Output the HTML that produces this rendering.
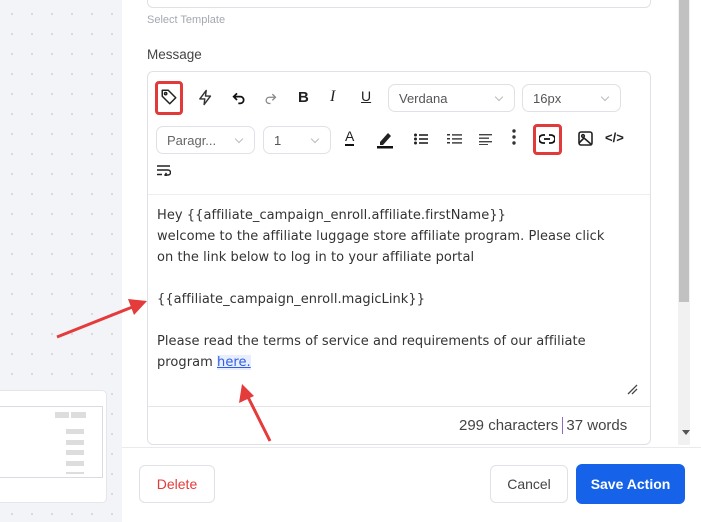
<!DOCTYPE html>
<html><head><style>
*{box-sizing:border-box;margin:0;padding:0}
body{width:701px;height:522px;overflow:hidden;position:relative;background:#fff;font-family:"Liberation Sans",sans-serif}
.left{position:absolute;left:0;top:0;width:122px;height:522px;background-color:#f3f4f7;background-image:radial-gradient(circle,#d6d8de 1px,transparent 1.3px);background-size:20px 20px;background-position:2px 4px}
.abs{position:absolute}
.ico{position:absolute;color:#222}
.sel{position:absolute;border:1px solid #dfe1e6;border-radius:7px;height:28px;font-size:13px;color:#555;padding:6px 10px}
.sel:after{content:"";position:absolute;right:12px;top:9px;width:5px;height:5px;border-right:1px solid #bbb;border-bottom:1px solid #bbb;transform:rotate(45deg)}
.txt{position:absolute;left:157px;font-family:"DejaVu Sans",sans-serif;font-size:13px;color:#333;white-space:nowrap;letter-spacing:0.05px}
</style></head><body>
<div class="left"></div>
<div class="abs" style="left:0;top:390px;width:107px;height:113px;background:#fff;border:1px solid #e4e6ea;border-left:none;border-radius:0 5px 5px 0"></div>
<div class="abs" style="left:0;top:406px;width:103px;height:72px;border:1px solid #d9dbe0;border-left:none"></div>
<div class="abs" style="left:55px;top:412px;width:14px;height:6px;background:#ddd"></div>
<div class="abs" style="left:71px;top:412px;width:15px;height:6px;background:#ddd"></div>
<div class="abs" style="left:66px;top:429px;width:18px;height:5px;background:#ddd"></div>
<div class="abs" style="left:66px;top:440px;width:18px;height:5px;background:#ddd"></div>
<div class="abs" style="left:66px;top:450px;width:18px;height:5px;background:#ddd"></div>
<div class="abs" style="left:66px;top:461px;width:18px;height:5px;background:#ddd"></div>
<div class="abs" style="left:66px;top:472px;width:18px;height:2px;background:#ddd"></div>
<div class="abs" style="left:678px;top:0;width:12px;height:445px;background:#f1f1f1"></div>
<div class="abs" style="left:679px;top:0;width:10px;height:302px;background:#c1c1c1"></div>
<div class="abs" style="left:682px;top:430px;width:0;height:0;border-left:4px solid transparent;border-right:4px solid transparent;border-top:5px solid #555"></div>
<div class="abs" style="left:147px;top:-10px;width:504px;height:18px;border:1px solid #dfe1e6;border-radius:6px"></div>
<div class="abs" style="left:147px;top:14px;font-size:11px;color:#a3a8b0">Select Template</div>
<div class="abs" style="left:147px;top:47px;font-size:13.5px;color:#444">Message</div>
<div class="abs" style="left:147px;top:71px;width:504px;height:374px;border:1px solid #dfe1e6;border-radius:6px"></div>
<div class="abs" style="left:148px;top:194px;width:502px;height:1px;background:#eceef1"></div>
<div class="abs" style="left:148px;top:406px;width:502px;height:1px;background:#e4e6ea"></div>
<div class="abs" style="left:155px;top:81px;width:28px;height:34px;border:3px solid #e03a3a;border-radius:4px"></div>
<svg class="ico" style="left:160px;top:88px" width="18" height="18" viewBox="0 0 24 24" fill="none" stroke="#222" stroke-width="2" stroke-linejoin="round"><path d="M3 3h8l10 10-8 8L3 11z"/><circle cx="7.5" cy="7.5" r="1.5"/></svg>
<svg class="ico" style="left:197px;top:89px" width="17" height="17" viewBox="0 0 24 24" fill="none" stroke="#333" stroke-width="2" stroke-linejoin="round"><path d="M13 2L4 14h7l-1 8 9-12h-7z"/></svg>
<svg class="ico" style="left:231px;top:90px" width="16" height="16" viewBox="0 0 24 24" fill="none" stroke="#111" stroke-width="2.6"><path d="M9 5L4 10l5 5M4 10h10a5 5 0 010 10h-3"/></svg>
<svg class="ico" style="left:263px;top:91px" width="15" height="15" viewBox="0 0 24 24" fill="none" stroke="#888" stroke-width="2"><path d="M15 5l5 5-5 5M20 10H10a5 5 0 000 10h2"/></svg>
<div class="ico" style="left:298px;top:89px;font-weight:bold;font-size:15px">B</div>
<div class="ico" style="left:330px;top:88px;font-style:italic;font-size:16px;font-family:'Liberation Serif',serif">I</div>
<div class="ico" style="left:361px;top:88px;font-size:14px;text-decoration:underline">U</div>
<div class="sel" style="left:388px;top:84px;width:127px">Verdana</div>
<div class="sel" style="left:522px;top:84px;width:99px">16px</div>
<div class="sel" style="left:156px;top:126px;width:99px;color:#666">Paragr...</div>
<div class="sel" style="left:263px;top:126px;width:68px">1</div>
<div class="ico" style="left:345px;top:129px;font-size:14px;border-bottom:2px solid #111;line-height:15px">A</div>
<svg class="ico" style="left:376px;top:129px" width="18" height="20" viewBox="0 0 18 20"><path d="M4 13l8-9 3 3-8 9H4z" fill="#222"/><rect x="1" y="17" width="16" height="2.5" fill="#111"/></svg>
<svg class="ico" style="left:414px;top:133px" width="14" height="12" viewBox="0 0 14 12" fill="#222"><circle cx="1.5" cy="2" r="1.5"/><circle cx="1.5" cy="6" r="1.5"/><circle cx="1.5" cy="10" r="1.5"/><rect x="5" y="1.2" width="9" height="1.6"/><rect x="5" y="5.2" width="9" height="1.6"/><rect x="5" y="9.2" width="9" height="1.6"/></svg>
<svg class="ico" style="left:447px;top:133px" width="15" height="12" viewBox="0 0 15 12" fill="#333"><rect x="0" y="1" width="3" height="1.5"/><rect x="0" y="5" width="3" height="1.5"/><rect x="0" y="9" width="3" height="1.5"/><rect x="5" y="1.2" width="10" height="1.4"/><rect x="5" y="5.2" width="10" height="1.4"/><rect x="5" y="9.2" width="10" height="1.4"/></svg>
<svg class="ico" style="left:479px;top:133px" width="14" height="12" viewBox="0 0 14 12" fill="#444"><rect y="1" width="13" height="1.4"/><rect y="4.5" width="10" height="1.4"/><rect y="8" width="13" height="1.4"/><rect y="11" width="9" height="1"/></svg>
<svg class="ico" style="left:512px;top:129px" width="4" height="18" viewBox="0 0 4 18" fill="#333"><circle cx="2" cy="2" r="1.7"/><circle cx="2" cy="8" r="1.7"/><circle cx="2" cy="14" r="1.7"/></svg>
<div class="abs" style="left:533px;top:124px;width:29px;height:31px;border:3px solid #e03a3a;border-radius:4px"></div>
<svg class="ico" style="left:539px;top:133px" width="16" height="12" viewBox="0 0 16 12" fill="none" stroke="#111" stroke-width="1.8"><path d="M6 2H4a4 4 0 000 8h2M10 2h2a4 4 0 010 8h-2M5 6h6"/></svg>
<svg class="ico" style="left:578px;top:131px" width="15" height="15" viewBox="0 0 15 15" fill="none" stroke="#222" stroke-width="1.6"><rect x="1" y="1" width="13" height="13" rx="2"/><circle cx="5" cy="5" r="1.3"/><path d="M1 12l5-5 8 7"/></svg>
<div class="ico" style="left:605px;top:130px;font-size:13px;font-weight:bold">&lt;/&gt;</div>
<svg class="ico" style="left:157px;top:165px" width="14" height="11" viewBox="0 0 14 11" fill="none" stroke="#222" stroke-width="1.5"><path d="M0 1h13M0 5h11a2.5 2.5 0 010 5H8M0 9.5h5M9.5 8l-1.5 2 1.5 1.5"/></svg>
<div class="txt" style="top:208px">Hey {{affiliate_campaign_enroll.affiliate.firstName}}</div>
<div class="txt" style="top:229px">welcome to the affiliate luggage store affiliate program. Please click</div>
<div class="txt" style="top:250px">on the link below to log in to your affiliate portal</div>
<div class="txt" style="top:292px">{{affiliate_campaign_enroll.magicLink}}</div>
<div class="txt" style="top:334px">Please read the terms of service and requirements of our affiliate</div>
<div class="txt" style="top:355px">program <span style="color:#2f5fe0;text-decoration:underline;background:#e8eeff">here.</span></div>
<svg class="ico" style="left:626px;top:383px" width="12" height="12" viewBox="0 0 12 12" stroke="#444" stroke-width="1.3"><path d="M2 11L11 2M6 11l5-5"/></svg>
<div class="abs" style="left:459px;top:417px;font-size:15px;color:#444;white-space:nowrap">299 characters <span style="border-left:1px solid #8a6cc4;padding-left:3px">37 words</span></div>
<div class="abs" style="left:122px;top:447px;width:579px;height:1px;background:#e8eaee"></div>
<div class="abs" style="left:139px;top:465px;width:76px;height:38px;border:1px solid #dfe1e6;border-radius:6px;color:#e23b3b;font-size:14px;text-align:center;line-height:36px">Delete</div>
<div class="abs" style="left:490px;top:465px;width:78px;height:38px;border:1px solid #dfe1e6;border-radius:6px;color:#444;font-size:14px;text-align:center;line-height:36px">Cancel</div>
<div class="abs" style="left:576px;top:464px;width:109px;height:40px;background:#1663ea;border-radius:6px;color:#fff;font-size:14px;font-weight:bold;text-align:center;line-height:40px">Save Action</div>
<svg class="abs" style="left:0;top:0" width="701" height="522"><g stroke="#e43b3b" stroke-width="3" fill="#e43b3b"><line x1="57" y1="337" x2="135" y2="306"/><polygon points="147,301 128,299 134,315" stroke="none"/><line x1="270" y1="441" x2="247" y2="395"/><polygon points="242,384 239,403 254,396" stroke="none"/></g></svg>
</body></html>
